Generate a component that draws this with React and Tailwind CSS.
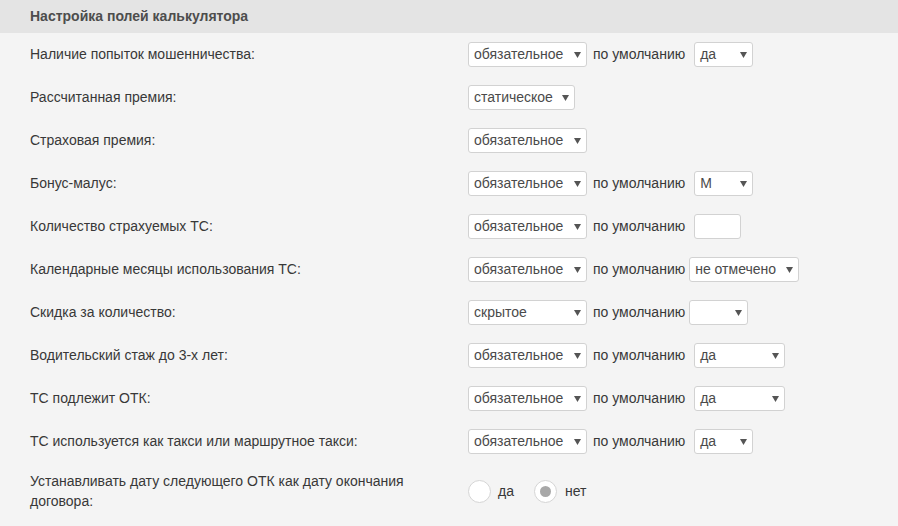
import React from "react";

function Sel({ value, w, ml = "ml-[9px]" }) {
  return (
    <div
      className={`${ml} h-[25px] bg-white border border-[#d2d2d2] rounded-[3px] flex items-center justify-between pl-[5px] pr-[5px] text-[14px] text-[#4a4a4a]`}
      style={{ width: w }}
    >
      <span>{value}</span>
      <svg width="7" height="6" viewBox="0 0 7 6" className="shrink-0">
        <path d="M0 0 H7 L3.5 6 Z" fill="#555" />
      </svg>
    </div>
  );
}

function Row({ label, first, firstW, second, secondW, secondMl, input }) {
  return (
    <div className="flex items-center h-[43px]">
      <div className="w-[438px] text-[14px] text-[#383838]">{label}</div>
      <Sel value={first} w={firstW} ml="ml-0" />
      {(second !== undefined || input) && (
        <>
          <span className="ml-[6px] text-[14px] text-[#383838]">по умолчанию</span>
          {input ? (
            <div className="ml-[9px] w-[47px] h-[25px] bg-white border border-[#d2d2d2] rounded-[3px]" />
          ) : (
            <Sel value={second} w={secondW} ml={secondMl || "ml-[9px]"} />
          )}
        </>
      )}
    </div>
  );
}

export default function App() {
  return (
    <div
      className="w-[898px] h-[526px] bg-[#f4f4f4] overflow-hidden"
      style={{ fontFamily: '"Liberation Sans", Arial, sans-serif' }}
    >
      <div className="h-[33px] bg-[#e4e4e4] flex items-center px-[30px] text-[14px] font-bold text-[#4d4d4d]">
        Настройка полей калькулятора
      </div>
      <div className="px-[30px]">
        <Row label="Наличие попыток мошенничества:" first="обязательное" firstW={119} second="да" secondW={59} />
        <Row label="Рассчитанная премия:" first="статическое" firstW={107} />
        <Row label="Страховая премия:" first="обязательное" firstW={119} />
        <Row label="Бонус-малус:" first="обязательное" firstW={119} second="М" secondW={59} />
        <Row label="Количество страхуемых ТС:" first="обязательное" firstW={119} input />
        <Row label="Календарные месяцы использования ТС:" first="обязательное" firstW={119} second="не отмечено" secondW={110} secondMl="ml-[4px]" />
        <Row label="Скидка за количество:" first="скрытое" firstW={119} second="" secondW={59} secondMl="ml-[4px]" />
        <Row label="Водительский стаж до 3-х лет:" first="обязательное" firstW={119} second="да" secondW={91} />
        <Row label="ТС подлежит ОТК:" first="обязательное" firstW={119} second="да" secondW={91} />
        <Row label="ТС используется как такси или маршрутное такси:" first="обязательное" firstW={119} second="да" secondW={59} />
        <div className="flex items-center py-[8px]">
          <div className="w-[438px] text-[14px] leading-[20px] text-[#383838] pr-[40px]">
            Устанавливать дату следующего ОТК как дату окончания договора:
          </div>
          <div className="flex items-center">
            <div className="w-[23px] h-[23px] rounded-full bg-white border border-[#d5d5d5]" />
            <span className="ml-[7px] text-[14px] text-[#383838]">да</span>
            <div className="ml-[20px] w-[23px] h-[23px] rounded-full bg-white border border-[#d5d5d5] flex items-center justify-center">
              <div className="w-[11px] h-[11px] rounded-full bg-[#a8a8a8]" />
            </div>
            <span className="ml-[8px] text-[14px] text-[#383838]">нет</span>
          </div>
        </div>
      </div>
    </div>
  );
}
